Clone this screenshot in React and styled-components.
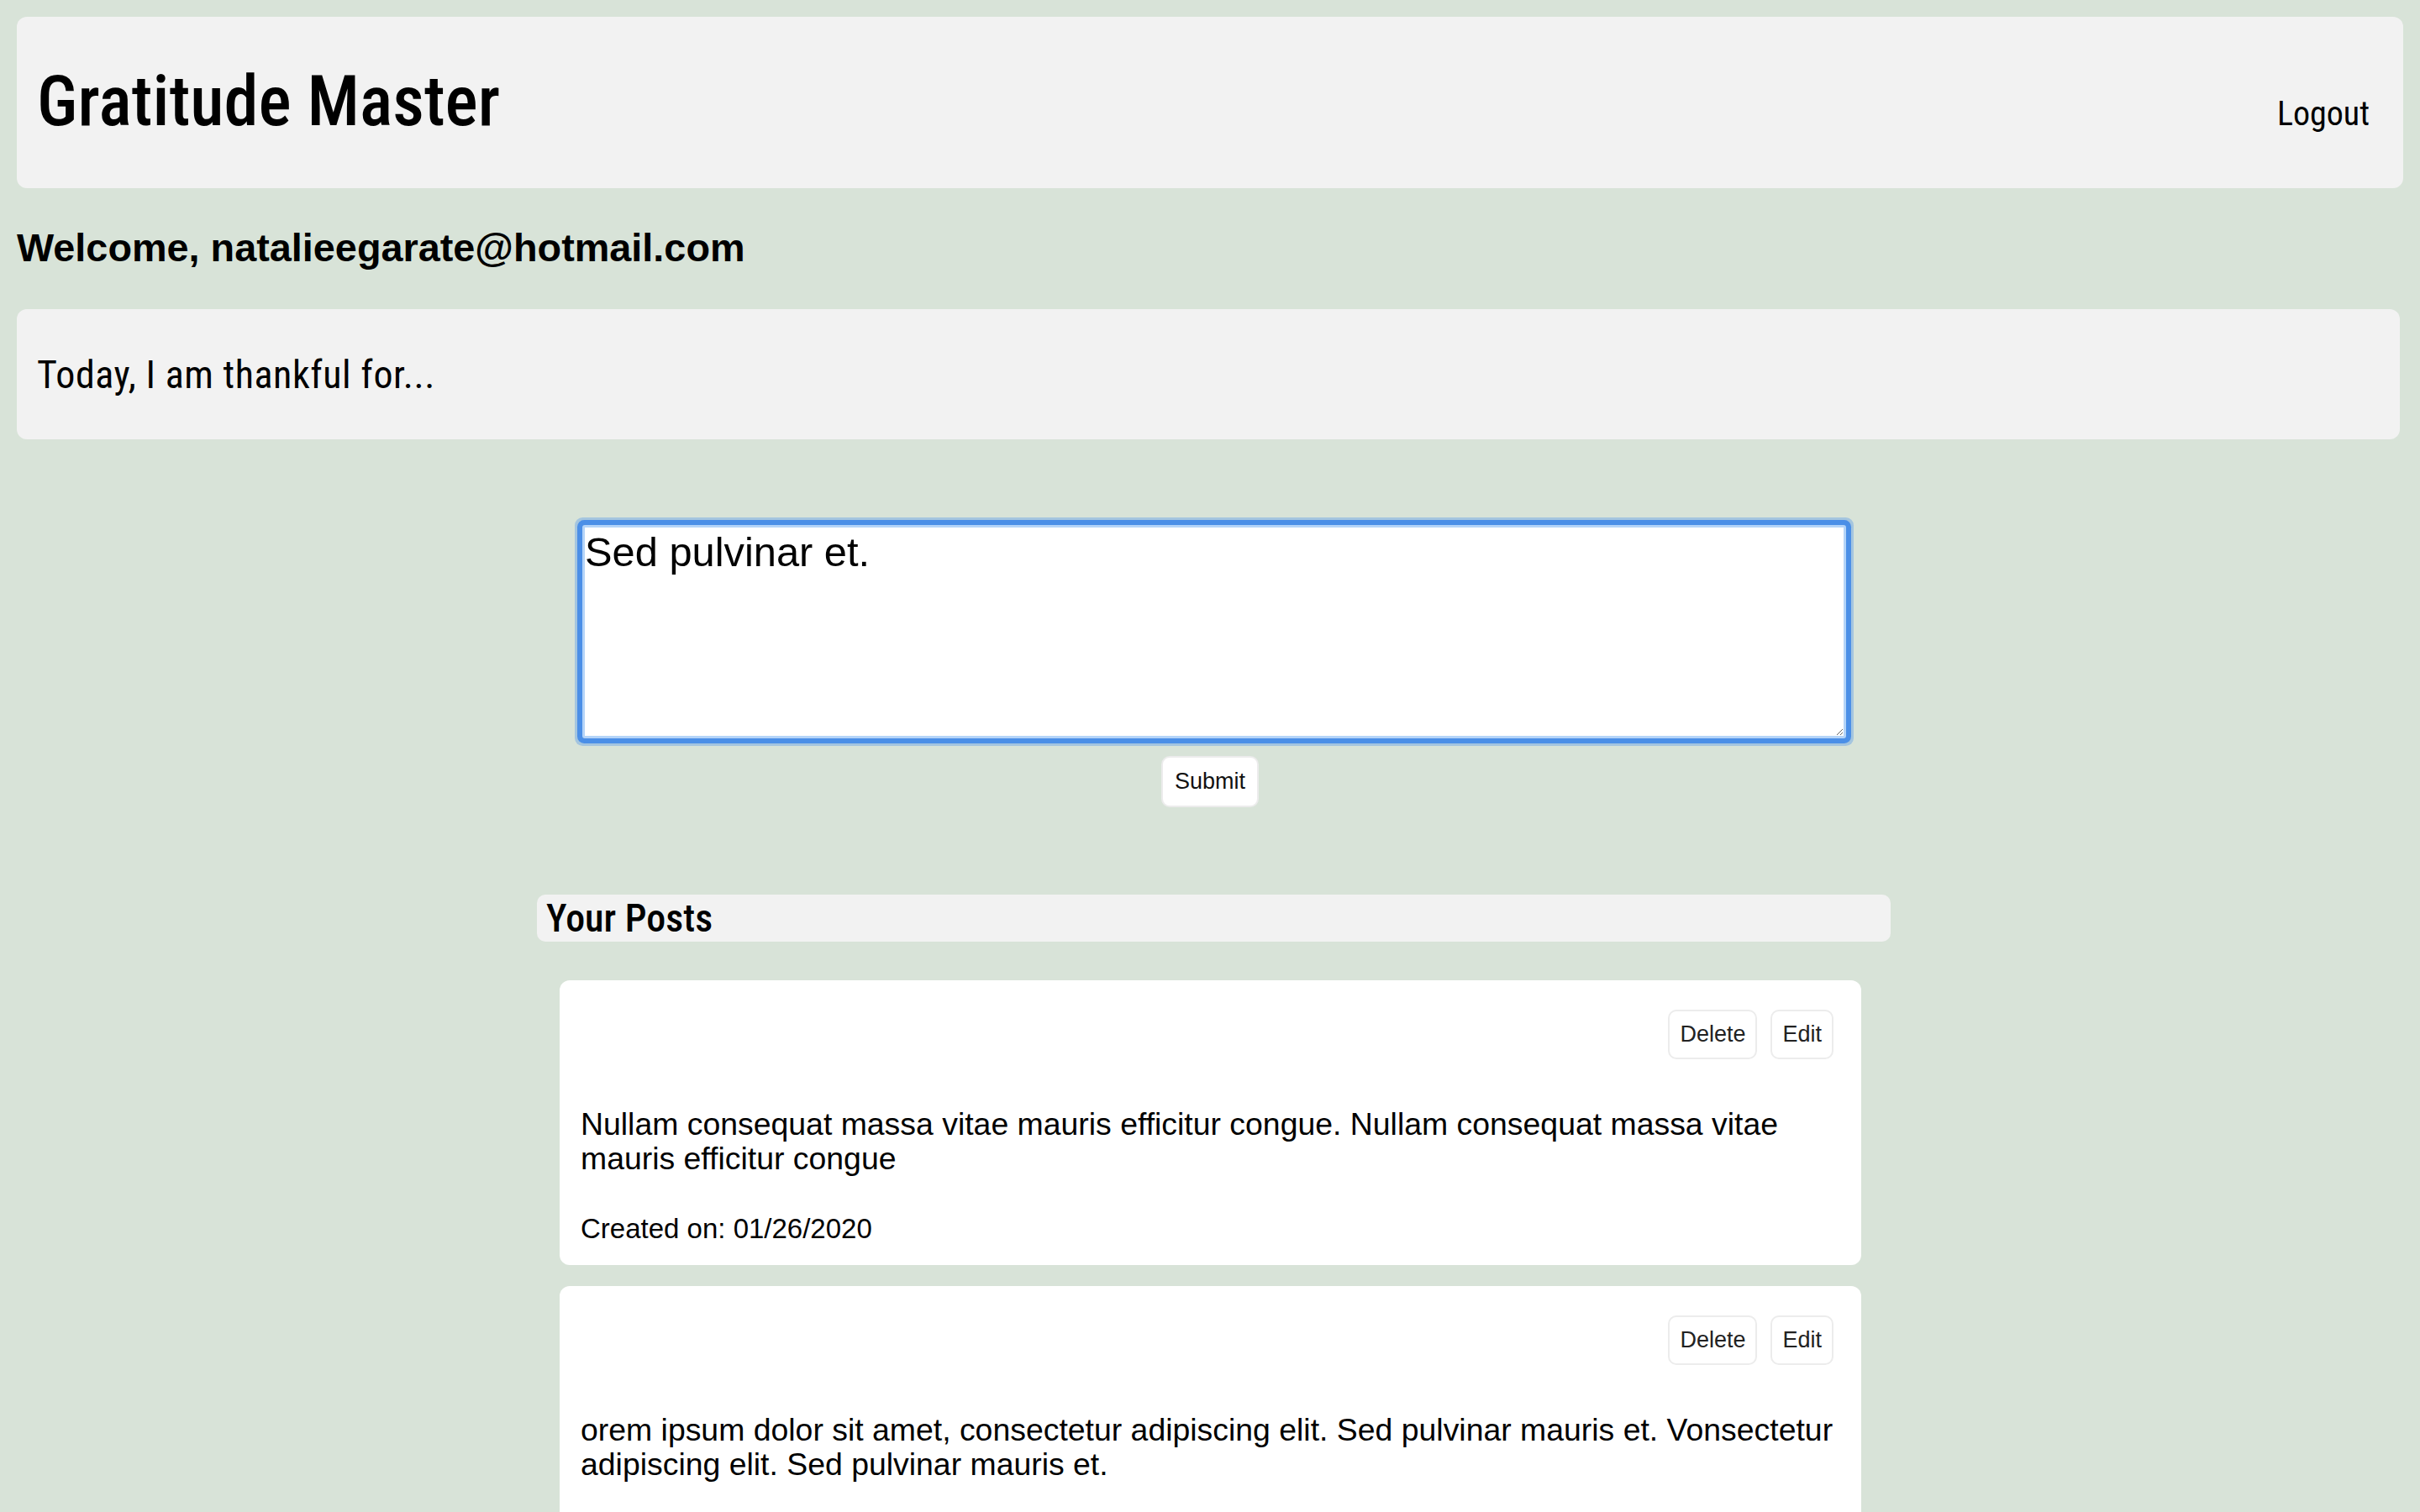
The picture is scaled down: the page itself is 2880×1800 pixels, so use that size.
import React, { useEffect, useRef } from "react";
import styled, { createGlobalStyle } from "styled-components";

const GlobalStyle = createGlobalStyle`
  html, body {
    margin: 0;
    padding: 0;
  }
  body {
    background: #d8e3d8;
    color: #000;
    font-family: "Liberation Sans", Arial, Helvetica, sans-serif;
  }
`;

const Page = styled.div`
  box-sizing: border-box;
  height: 100vh;
  overflow: hidden;
  padding: 20px 20px 0;
  background: #d8e3d8;
`;

const Header = styled.header`
  display: flex;
  align-items: baseline;
  justify-content: space-between;
  background: #f2f2f2;
  border-radius: 12px;
  padding: 53px 40px 55px 24px;
`;

const Title = styled.h1`
  margin: 0;
  font-family: "Roboto Condensed", Roboto, sans-serif;
  font-weight: 500;
  font-size: 82.5px;
  line-height: 96px;
`;

const LogoutLink = styled.a`
  font-family: "Roboto Condensed", Roboto, sans-serif;
  font-weight: 400;
  font-size: 40px;
  color: #000;
  text-decoration: none;
  cursor: pointer;
`;

const Welcome = styled.h2`
  margin: 44px 0 46px;
  font-size: 46.8px;
  font-weight: 700;
  line-height: normal;
`;

const PromptPanel = styled.div`
  background: #f2f2f2;
  border-radius: 12px;
  padding: 51px 24px 50px;
  margin-right: 4px;
`;

const PromptText = styled.h3`
  margin: 0;
  font-family: "Roboto Condensed", Roboto, sans-serif;
  font-weight: 400;
  font-size: 46px;
  letter-spacing: 0.55px;
  line-height: 54px;
`;

const EntryForm = styled.form`
  display: flex;
  flex-direction: column;
  align-items: center;
  gap: 21px;
  margin-top: 102px;
`;

const EntryArea = styled.textarea`
  box-sizing: border-box;
  width: 1504px;
  height: 254px;
  margin: 0 0 0 10px;
  padding: 1px 0;
  border: 3px solid #b4d4f8;
  border-radius: 3px;
  outline: none;
  box-shadow: 0 0 0 6px #4b8fe7, 0 0 0 9px #a4c5df;
  background: #fff;
  color: #000;
  caret-color: #000;
  font-family: "Liberation Sans", Arial, Helvetica, sans-serif;
  font-size: 48.8px;
  line-height: normal;
  resize: both;
`;

const ActionButton = styled.button`
  box-sizing: border-box;
  font-family: "Liberation Sans", Arial, Helvetica, sans-serif;
  font-size: 27px;
  line-height: normal;
  padding: ${(p) => (p.$large ? "13px 14px" : "12px 12px")};
  border: 2px solid #ececec;
  border-radius: 10px;
  background: #fff;
  color: ${(p) => (p.$large ? "#111" : "#222")};
  cursor: pointer;
`;

const PostsSection = styled.section`
  width: 1611px;
  margin: 104px 0 0 calc(50% - 801px);
`;

const PostsHeading = styled.h2`
  margin: 0;
  height: 56px;
  padding: 0 11px;
  background: #f2f2f2;
  border-radius: 10px;
  font-family: "Roboto Condensed", Roboto, sans-serif;
  font-weight: 500;
  font-size: 46px;
  line-height: 56px;
`;

const PostList = styled.div`
  display: flex;
  flex-direction: column;
  gap: 25px;
  width: 1549px;
  margin-top: 46px;
  padding-left: 27px;
`;

const PostCard = styled.article`
  background: #fff;
  border-radius: 12px;
  padding: 35px 14px 24px 25px;
`;

const ButtonRow = styled.div`
  display: flex;
  justify-content: flex-end;
  gap: 16px;
  padding-right: 19px;
`;

const PostBody = styled.p`
  margin: 57px 0 0;
  font-size: 37.4px;
  line-height: 41px;
`;

const CreatedOn = styled.p`
  margin: 44px 0 0;
  font-size: 33px;
  line-height: normal;
`;

const posts = [
  {
    id: 1,
    text:
      "Nullam consequat massa vitae mauris efficitur congue. Nullam consequat massa vitae mauris efficitur congue",
    date: "01/26/2020",
  },
  {
    id: 2,
    text:
      "orem ipsum dolor sit amet, consectetur adipiscing elit. Sed pulvinar mauris et. Vonsectetur adipiscing elit. Sed pulvinar mauris et.",
    date: "01/26/2020",
  },
];

export default function App() {
  const areaRef = useRef(null);

  useEffect(() => {
    const el = areaRef.current;
    if (el) {
      el.focus();
      const len = el.value.length;
      el.setSelectionRange(len, len);
    }
  }, []);

  return (
    <Page>
      <GlobalStyle />
      <Header>
        <Title>Gratitude Master</Title>
        <LogoutLink>Logout</LogoutLink>
      </Header>
      <Welcome>Welcome, natalieegarate@hotmail.com</Welcome>
      <PromptPanel>
        <PromptText>Today, I am thankful for...</PromptText>
      </PromptPanel>
      <EntryForm onSubmit={(e) => e.preventDefault()}>
        <EntryArea ref={areaRef} defaultValue="Sed pulvinar et." />
        <ActionButton type="submit" $large>
          Submit
        </ActionButton>
      </EntryForm>
      <PostsSection>
        <PostsHeading>Your Posts</PostsHeading>
        <PostList>
          {posts.map((post) => (
            <PostCard key={post.id}>
              <ButtonRow>
                <ActionButton type="button">Delete</ActionButton>
                <ActionButton type="button">Edit</ActionButton>
              </ButtonRow>
              <PostBody>{post.text}</PostBody>
              <CreatedOn>Created on: {post.date}</CreatedOn>
            </PostCard>
          ))}
        </PostList>
      </PostsSection>
    </Page>
  );
}
